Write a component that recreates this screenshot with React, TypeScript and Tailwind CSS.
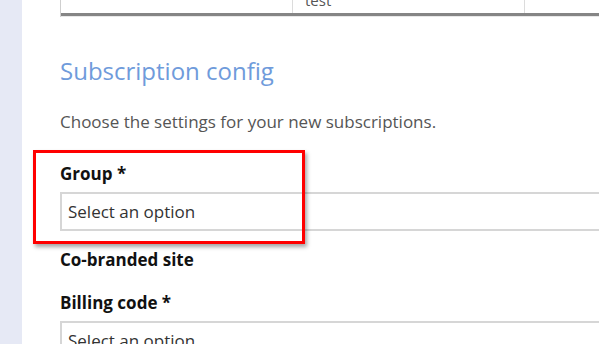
import React from 'react'

const Field = ({ label, required }: { label: string; required?: boolean }) => (
  <div className="flex flex-col gap-[8px]">
    <label className="text-[17px] font-bold leading-[20px] text-[#111]">
      {label}
      {required && ' *'}
    </label>
    <div className="flex h-[39px] w-[700px] items-center border-2 border-[#d6d6d6] bg-white px-[6px] text-[17px] text-[#333]">
      Select an option
    </div>
  </div>
)

const App = () => {
  return (
    <div className="flex h-[344px] w-[599px] overflow-hidden bg-white font-['Open_Sans',sans-serif]">
      {/* side rail */}
      <div className="w-[22px] shrink-0 bg-[#e6e9f5]" />

      <div className="relative flex-1 pl-[38px]">
        {/* tail of the previous table */}
        <div className="w-[700px] border-l border-[#cfcfcf]">
          <div className="grid h-[13px] grid-cols-[232px_232px_1fr] overflow-hidden">
            <div className="border-r border-[#dcdcdc]" />
            <div className="overflow-hidden border-r border-[#dcdcdc] pl-[12px]">
              <span className="-mt-[10px] block text-[15px] leading-[20px] text-[#555]">test</span>
            </div>
            <div />
          </div>
          <div className="h-[3px] bg-[#858585]" />
          <div className="h-px bg-[#e8e8e8]" />
        </div>

        <h2 className="mt-[39px] text-[24px] font-normal leading-[30px] text-[#6f9bdb]">
          Subscription config
        </h2>

        <p className="mt-[26px] text-[17px] leading-[20px] text-[#555]">
          Choose the settings for your new subscriptions.
        </p>

        <div className="mt-[32px] flex flex-col">
          <Field label="Group" required />
          <div className="mt-[19px] text-[17px] font-bold leading-[20px] text-[#111]">
            Co-branded site
          </div>
          <div className="mt-[23px]">
            <Field label="Billing code" required />
          </div>
        </div>

        {/* annotation highlight */}
        <div className="absolute left-[11px] top-[150px] h-[94px] w-[272px] border-[3px] border-[#ff0000] shadow-[2px_3px_4px_rgba(0,0,0,0.35)]" />
      </div>
    </div>
  )
}

export default App
